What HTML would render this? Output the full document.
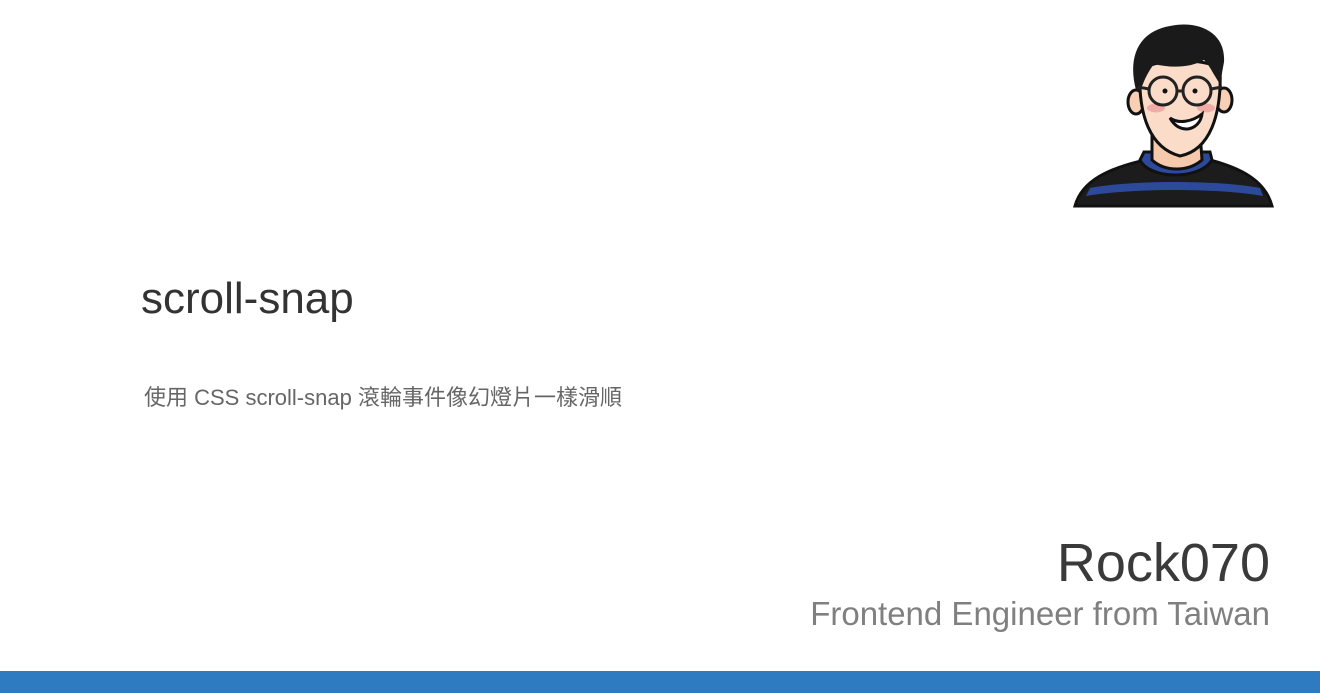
<!DOCTYPE html>
<html><head><meta charset="utf-8"><style>
html,body{margin:0;padding:0;background:#fff;}
body{width:1320px;height:693px;position:relative;overflow:hidden;font-family:"Liberation Sans","Noto Sans CJK TC",sans-serif;}
.t{position:absolute;white-space:nowrap;line-height:1;}
#title{left:141px;top:277px;font-size:44px;color:#333;}
#sub{left:144px;top:387px;font-size:22px;color:#666;}
#name{right:50px;top:536px;font-size:54px;color:#3a3a3a;}
#role{right:50px;top:597px;font-size:33px;color:#808080;}
#bar{position:absolute;left:0;top:671px;width:1320px;height:22px;background:#2e7bc1;}
svg{position:absolute;left:1070px;top:20px;}
</style></head><body>
<svg width="210" height="190" viewBox="0 0 210 190">
  <path d="M5 186 C12 160 40 148 75 140 L140 140 C170 148 195 160 202 186 Z" fill="#1c1c1c" stroke="#111" stroke-width="3"/>
  <path d="M20 168 C60 160 150 160 190 168 L193 176 C150 168 60 168 16 176Z" fill="#2d4a9a"/>
  <path d="M70 140 C80 160 130 160 142 140 L140 132 L74 132Z" fill="#2d4a9a" stroke="#111" stroke-width="3"/>
  <path d="M82 112 L82 140 C95 152 118 152 132 140 L130 112Z" fill="#f6c9ad" stroke="#111" stroke-width="3"/>
  <ellipse cx="66" cy="82" rx="8" ry="12" fill="#f6cfb5" stroke="#111" stroke-width="3"/>
  <ellipse cx="154" cy="80" rx="8" ry="12" fill="#f6cfb5" stroke="#111" stroke-width="3"/>
  <path d="M70 50 C68 95 80 128 110 136 C140 130 152 95 150 48 C132 38 88 38 70 50Z" fill="#fbdcc8" stroke="#111" stroke-width="3"/>
  <path d="M66 70 C58 40 66 12 100 6 C128 0 156 12 154 42 L150 64 C142 52 140 46 134 40 C120 48 100 48 84 44 C78 52 74 60 70 72Z" fill="#1a1a1a"/>
  <ellipse cx="86" cy="88" rx="9" ry="4.5" fill="#f0a0a0" opacity=".8"/>
  <ellipse cx="136" cy="88" rx="9" ry="4.5" fill="#f0a0a0" opacity=".8"/>
  <circle cx="93" cy="71" r="14" fill="none" stroke="#222" stroke-width="3"/>
  <circle cx="127" cy="71" r="14" fill="none" stroke="#222" stroke-width="3"/>
  <path d="M107 71 L113 71 M79 69 L68 67 M141 69 L152 67" stroke="#222" stroke-width="3"/>
  <circle cx="95" cy="71" r="2.5" fill="#111"/><circle cx="125" cy="71" r="2.5" fill="#111"/>
  <path d="M100 98 C108 104 122 102 132 94 C130 110 110 116 100 98Z" fill="#fff" stroke="#111" stroke-width="3"/>
</svg>
<div class="t" id="title">scroll-snap</div>
<div class="t" id="sub">使用 CSS scroll-snap 滾輪事件像幻燈片一樣滑順</div>
<div class="t" id="name">Rock070</div>
<div class="t" id="role">Frontend Engineer from Taiwan</div>
<div id="bar"></div>
</body></html>
